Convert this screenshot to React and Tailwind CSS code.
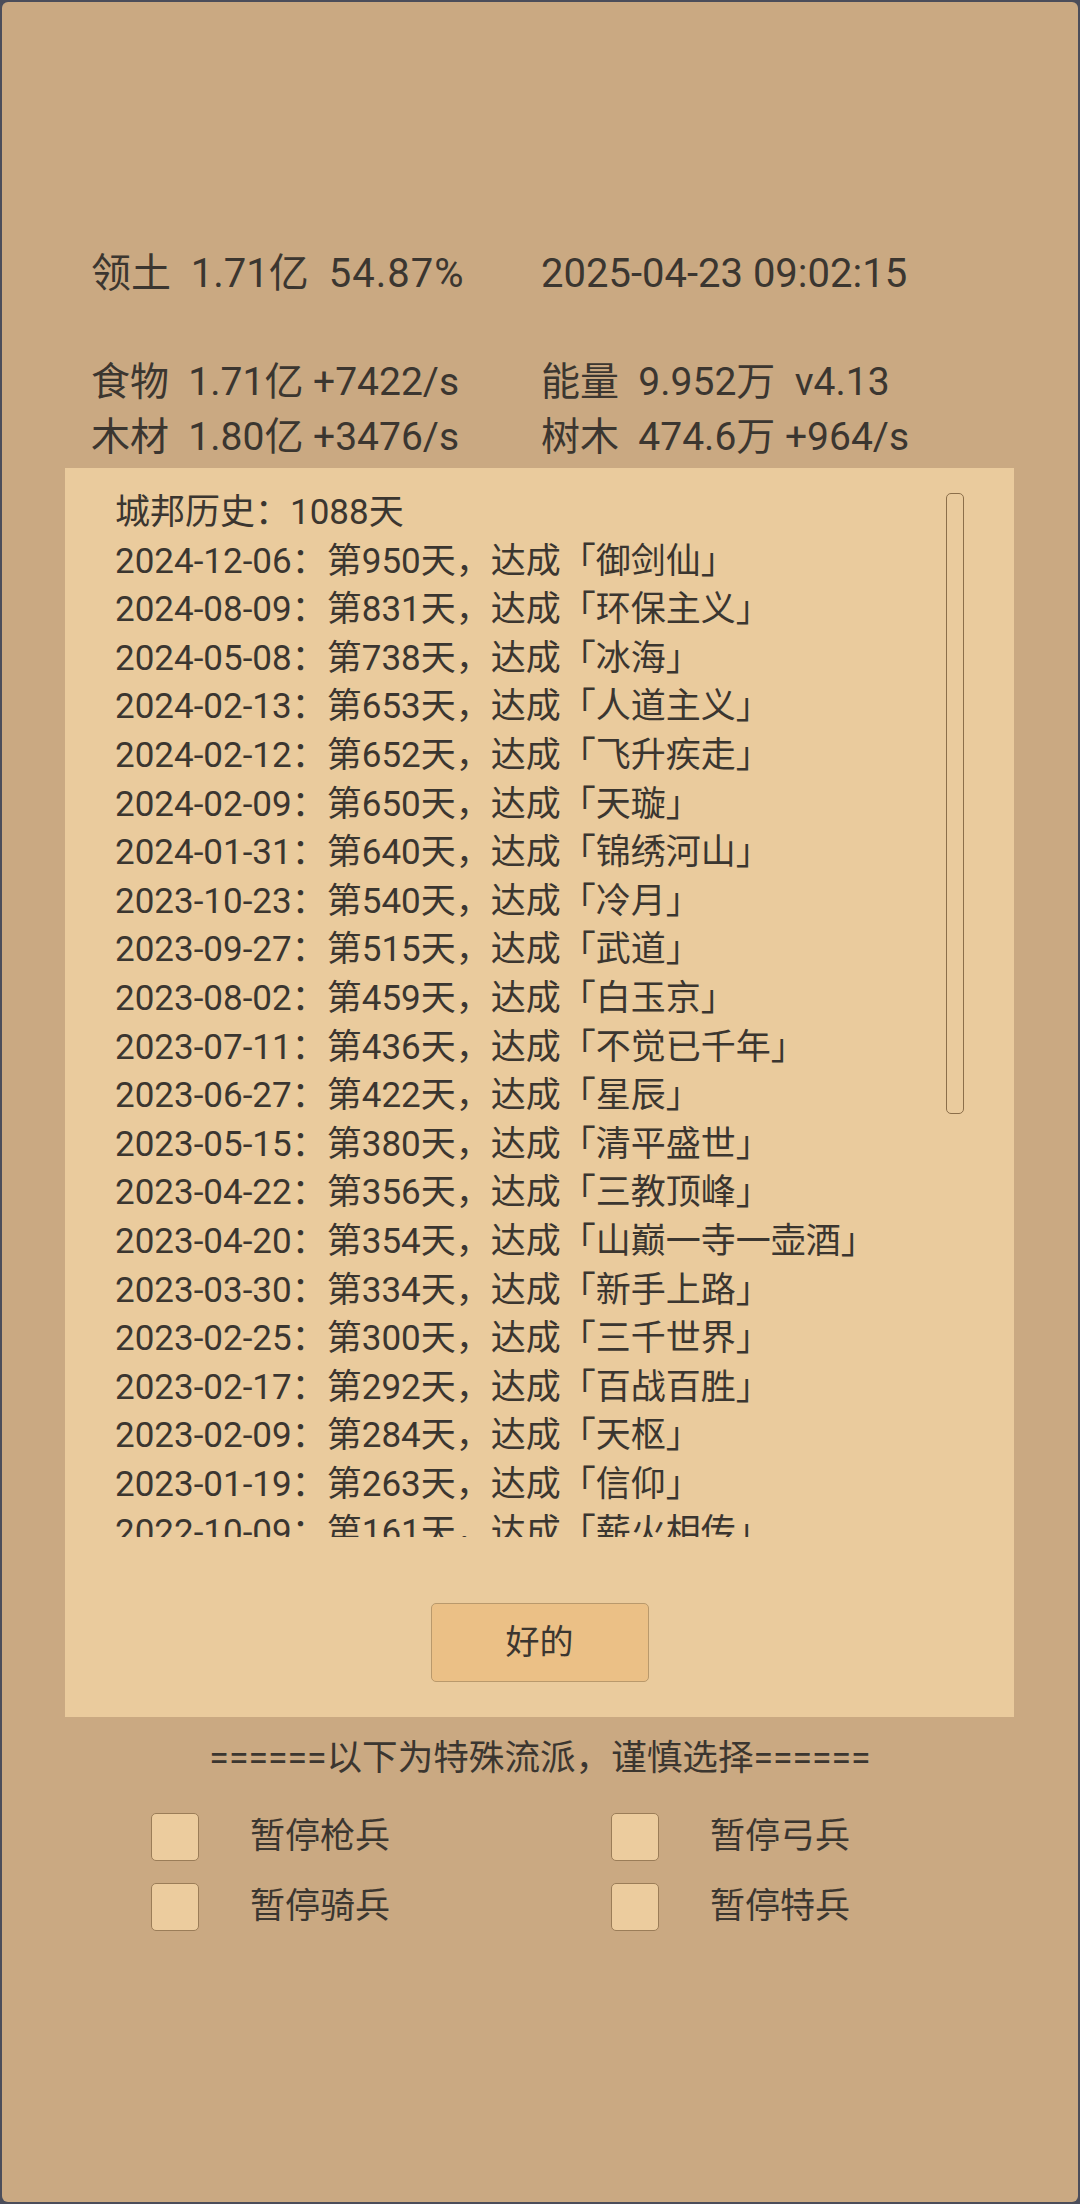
import React from "react";

const history = [
  "城邦历史：1088天",
  "2024-12-06：第950天，达成「御剑仙」",
  "2024-08-09：第831天，达成「环保主义」",
  "2024-05-08：第738天，达成「冰海」",
  "2024-02-13：第653天，达成「人道主义」",
  "2024-02-12：第652天，达成「飞升疾走」",
  "2024-02-09：第650天，达成「天璇」",
  "2024-01-31：第640天，达成「锦绣河山」",
  "2023-10-23：第540天，达成「冷月」",
  "2023-09-27：第515天，达成「武道」",
  "2023-08-02：第459天，达成「白玉京」",
  "2023-07-11：第436天，达成「不觉已千年」",
  "2023-06-27：第422天，达成「星辰」",
  "2023-05-15：第380天，达成「清平盛世」",
  "2023-04-22：第356天，达成「三教顶峰」",
  "2023-04-20：第354天，达成「山巅一寺一壶酒」",
  "2023-03-30：第334天，达成「新手上路」",
  "2023-02-25：第300天，达成「三千世界」",
  "2023-02-17：第292天，达成「百战百胜」",
  "2023-02-09：第284天，达成「天枢」",
  "2023-01-19：第263天，达成「信仰」",
  "2022-10-09：第161天，达成「薪火相传」",
  "2022-09-18：第140天，达成「开拓者」",
  "2022-08-01：第92天，达成「初具规模」",
];

function Check({ label }) {
  return (
    <div className="flex items-center h-[48px]">
      <div className="w-[48px] h-[48px] rounded-[5px] border-[1.5px] border-[#9b7d58] bg-[#eccc9e] box-border" />
      <span className="ml-[51px] text-[35px] leading-[48px]">{label}</span>
    </div>
  );
}

export default function App() {
  return (
    <div className="w-[1080px] h-[2204px] bg-[#4b4d5a] p-[2px] box-border font-[Roboto,'Noto_Sans_CJK_SC',sans-serif] text-[#3b3630]">
      <div className="w-full h-full bg-[#caa982] rounded-[6px] pt-[244px] box-border">
        {/* stats */}
        <div className="pl-[89px] text-[39px] leading-[55px] whitespace-pre">
          <div className="grid grid-cols-[450px_1fr] text-[40px]">
            <div>
              领土  1.71亿  <span className="tracking-[1px]">54.87%</span>
            </div>
            <div>2025-04-23 09:02:15</div>
          </div>
          <div className="h-[54px]" />
          <div className="grid grid-cols-[450px_1fr]">
            <div>食物  1.71亿 +7422/s</div>
            <div>能量  9.952万  v4.13</div>
            <div>木材  1.80亿 +3476/s</div>
            <div>树木  474.6万 +964/s</div>
          </div>
        </div>

        {/* history panel */}
        <div className="relative ml-[63px] mt-[3px] w-[949px] h-[1249px] bg-[#eacb9d] pt-[21px] box-border">
          <div className="pl-[50px] h-[1048px] overflow-hidden text-[35px] leading-[48.6px] whitespace-nowrap">
            {history.map((h, i) => (
              <div key={i}>{h}</div>
            ))}
          </div>
          <div className="absolute left-[881px] top-[25px] w-[18px] h-[621px] rounded-[5px] border-[1.5px] border-[#8c6f4a] box-border" />
          <div className="flex justify-center mt-[66px]">
            <button className="w-[218px] h-[79px] rounded-[5px] border-[1.5px] border-[#b9996c] bg-[#ebc086] text-[34px] text-[#3b3630] box-border">
              好的
            </button>
          </div>
        </div>

        {/* separator */}
        <div className="mt-[17px] text-center text-[35.6px] leading-[48px] whitespace-pre">
          ======以下为特殊流派，谨慎选择======
        </div>

        <div className="mt-[31px] pl-[149px] grid grid-cols-[460px_460px] gap-y-[22px]">
          <Check label="暂停枪兵" />
          <Check label="暂停弓兵" />
          <Check label="暂停骑兵" />
          <Check label="暂停特兵" />
        </div>
      </div>
    </div>
  );
}
